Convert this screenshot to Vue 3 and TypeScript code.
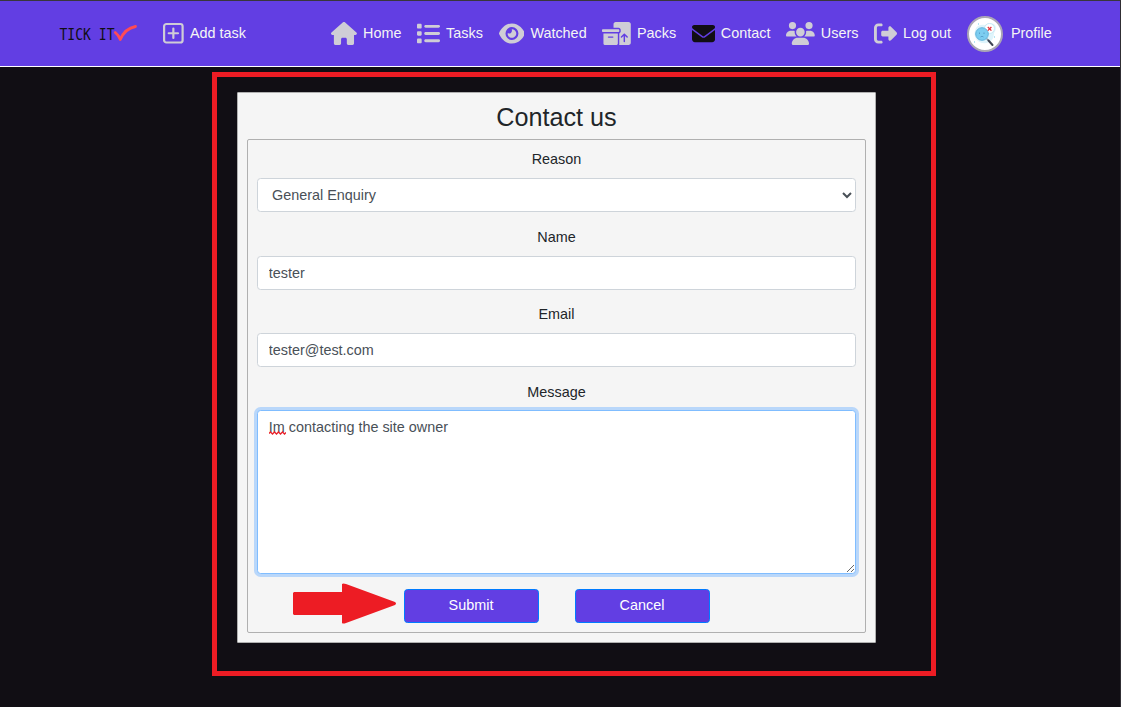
<script setup lang="ts">
import { ref } from 'vue'

interface NavLink {
  label: string
  width: number
  path: string
  dark?: boolean
}

const links: NavLink[] = [
  {
    label: 'Home',
    width: 576,
    path: 'M575.8 255.5c0 18-15 32.1-32 32.1h-32l.7 160.2c0 2.7-.2 5.4-.5 8.1V472c0 22.1-17.9 40-40 40H456c-1.1 0-2.2 0-3.3-.1c-1.4 .1-2.8 .1-4.2 .1H416 392c-22.1 0-40-17.9-40-40V448 384c0-17.7-14.3-32-32-32H256c-17.7 0-32 14.3-32 32v64 24c0 22.1-17.9 40-40 40H160 128.1c-1.5 0-3-.1-4.5-.2c-1.2 .1-2.4 .2-3.6 .2H104c-22.1 0-40-17.9-40-40V360c0-.9 0-1.9 .1-2.8V287.6H32c-18 0-32-14-32-32.1c0-9 3-17 10-24L266.4 8c7-7 15-8 22-8s15 2 21 7L564.8 231.5c8 7 12 15 11 24z',
  },
  {
    label: 'Tasks',
    width: 512,
    path: 'M24 40C10.7 40 0 50.7 0 64v56c0 13.3 10.7 24 24 24H80c13.3 0 24-10.7 24-24V64c0-13.3-10.7-24-24-24H24zM192 64c-17.7 0-32 14.3-32 32s14.3 32 32 32H480c17.7 0 32-14.3 32-32s-14.3-32-32-32H192zm0 160c-17.7 0-32 14.3-32 32s14.3 32 32 32H480c17.7 0 32-14.3 32-32s-14.3-32-32-32H192zm0 160c-17.7 0-32 14.3-32 32s14.3 32 32 32H480c17.7 0 32-14.3 32-32s-14.3-32-32-32H192zM0 232v48c0 13.3 10.7 24 24 24H80c13.3 0 24-10.7 24-24V232c0-13.3-10.7-24-24-24H24c-13.3 0-24 10.7-24 24zM24 368c-13.3 0-24 10.7-24 24v56c0 13.3 10.7 24 24 24H80c13.3 0 24-10.7 24-24V392c0-13.3-10.7-24-24-24H24z',
  },
  {
    label: 'Watched',
    width: 576,
    path: 'M288 32c-80.8 0-145.5 36.8-192.6 80.6C48.6 156 17.3 208 2.5 243.7c-3.3 7.9-3.3 16.7 0 24.6C17.3 304 48.6 356 95.4 399.4C142.5 443.2 207.2 480 288 480s145.5-36.8 192.6-80.6c46.8-43.5 78.1-95.4 93-131.1c3.3-7.9 3.3-16.7 0-24.6c-14.9-35.7-46.2-87.7-93-131.1C433.5 68.8 368.8 32 288 32zM144 256a144 144 0 1 1 288 0 144 144 0 1 1 -288 0zm144-64c0 35.3-28.7 64-64 64c-7.1 0-13.9-1.2-20.3-3.3c-5.5-1.8-11.9 1.6-11.7 7.4c.3 6.9 1.3 13.8 3.2 20.7c13.7 51.2 66.4 81.6 117.6 67.9s81.6-66.4 67.9-117.6c-11.1-41.5-47.8-69.4-88.6-71.1c-5.8-.2-9.2 6.1-7.4 11.7c2.1 6.4 3.3 13.2 3.3 20.3z',
  },
  {
    label: 'Packs',
    width: 640,
    path: 'M256 48c0-26.5 21.5-48 48-48H592c26.5 0 48 21.5 48 48V464c0 26.5-21.5 48-48 48H381.3c1.8-5 2.7-10.4 2.7-16V253.3c18.6-6.6 32-24.4 32-45.3V176c0-26.5-21.5-48-48-48H256V48zM571.3 347.3c6.2-6.2 6.2-16.4 0-22.6l-64-64c-6.2-6.2-16.4-6.2-22.6 0l-64 64c-6.2 6.2-6.2 16.4 0 22.6s16.4 6.2 22.6 0L480 310.6V432c0 8.8 7.2 16 16 16s16-7.2 16-16V310.6l36.7 36.7c6.2 6.2 16.4 6.2 22.6 0zM0 176c0-8.8 7.2-16 16-16H368c8.8 0 16 7.2 16 16v32c0 8.8-7.2 16-16 16H16c-8.8 0-16-7.2-16-16V176zm352 80V480c0 17.7-14.3 32-32 32H64c-17.7 0-32-14.3-32-32V256H352zM144 320c-8.8 0-16 7.2-16 16s7.2 16 16 16h96c8.8 0 16-7.2 16-16s-7.2-16-16-16H144z',
  },
  {
    label: 'Contact',
    width: 512,
    dark: true,
    path: 'M48 64C21.5 64 0 85.5 0 112c0 15.1 7.1 29.3 19.2 38.4L236.8 313.6c11.4 8.5 27 8.5 38.4 0L492.8 150.4c12.1-9.1 19.2-23.3 19.2-38.4c0-26.5-21.5-48-48-48H48zM0 176V384c0 35.3 28.7 64 64 64H448c35.3 0 64-28.7 64-64V176L294.4 339.2c-22.8 17.1-54 17.1-76.8 0L0 176z',
  },
  {
    label: 'Users',
    width: 640,
    path: 'M144 0a80 80 0 1 1 0 160A80 80 0 1 1 144 0zM512 0a80 80 0 1 1 0 160A80 80 0 1 1 512 0zM0 298.7C0 239.8 47.8 192 106.7 192h42.7c15.9 0 31 3.5 44.6 9.7c-1.3 7.2-1.9 14.7-1.9 22.3c0 38.2 16.8 72.5 43.3 96c-.2 0-.4 0-.7 0H21.3C9.6 320 0 310.4 0 298.7zM405.3 320c-.2 0-.4 0-.7 0c26.6-23.5 43.3-57.8 43.3-96c0-7.6-.7-15-1.9-22.3c13.6-6.3 28.7-9.7 44.6-9.7h42.7C592.2 192 640 239.8 640 298.7c0 11.8-9.6 21.3-21.3 21.3H405.3zM224 224a96 96 0 1 1 192 0 96 96 0 1 1 -192 0zM128 485.3C128 411.7 187.7 352 261.3 352H378.7C452.3 352 512 411.7 512 485.3c0 14.7-11.9 26.7-26.7 26.7H154.7c-14.7 0-26.7-11.9-26.7-26.7z',
  },
  {
    label: 'Log out',
    width: 512,
    path: 'M377.9 105.9L500.7 228.7c7.2 7.2 11.3 17.1 11.3 27.3s-4.1 20.1-11.3 27.3L377.9 406.1c-6.4 6.4-15 9.9-24 9.9c-18.7 0-33.9-15.2-33.9-33.9l0-62.1-128 0c-17.7 0-32-14.3-32-32l0-64c0-17.7 14.3-32 32-32l128 0 0-62.1c0-18.7 15.2-33.9 33.9-33.9c9 0 17.6 3.6 24 9.9zM160 96L96 96c-17.7 0-32 14.3-32 32l0 256c0 17.7 14.3 32 32 32l64 0c17.7 0 32 14.3 32 32s-14.3 32-32 32l-64 0c-53 0-96-43-96-96L0 128C0 75 43 32 96 32l64 0c17.7 0 32 14.3 32 32s-14.3 32-32 32z',
  },
]

const reason = ref('General Enquiry')
const name = ref('tester')
const email = ref('tester@test.com')
const message = ref('Im contacting the site owner')
</script>

<template>
  <div class="page">
    <header class="navbar">
      <svg class="logo" width="80" height="24" viewBox="0 0 80 24">
        <text x="0.5" y="17.7" textLength="55" lengthAdjust="spacingAndGlyphs">TICK IT</text>
        <path class="tick" d="M56.300 10.500Q59.500 13 61.300 17.500Q66 6.500 76.500 4.500" />
      </svg>
      <a class="link add">
        <svg width="21" height="23" viewBox="0 0 21 23">
          <rect x="1.100" y="2" width="18.500" height="18.500" rx="2.300" />
          <path d="M10.350 6.600v9.300M5.700 11.250h9.300" />
        </svg>
        <span>Add task</span>
      </a>
      <nav class="links">
        <a v-for="link in links" :key="link.label" class="link" :class="{ current: link.dark }">
          <svg :width="(link.width * 23.04) / 512" height="23.04" :viewBox="`0 0 ${link.width} 512`">
            <path :d="link.path" />
          </svg>
          <span>{{ link.label }}</span>
        </a>
        <a class="link profile">
          <svg width="36" height="36" viewBox="0 0 36 36">
            <circle cx="18" cy="18" r="17" fill="#fff" stroke="#aaa6b5" stroke-width="2" />
            <path d="M9 12Q12 8 18 9Q24 5 28 9Q30 13 27 17Q27 25 20 27Q12 28 9 23Q6 18 9 12Z" fill="#dff4fb" />
            <circle cx="22.500" cy="12.500" r="5" fill="#fff" stroke="#c9ebf5" />
            <path d="M19.500 22.500l2 2" stroke="#8296a5" stroke-width="1.500" />
            <path d="M21.500 24.500l4 4.500" stroke="#3f4452" stroke-width="2" stroke-linecap="round" />
            <circle cx="15" cy="18" r="6.300" fill="#7ccdf0" stroke="#62b4dd" />
            <path d="M12.500 16.500v1.500M17 16.500v1.500M13.500 21q1.500-1.500 3 0" fill="none" stroke="#4f96c2" stroke-width="0.800" />
            <path d="M20.800 11l3.600 3.600m0-3.600l-3.600 3.600" stroke="#e3343e" stroke-width="1.300" />
            <path d="M11 8h1M7 26h1M27 21h1" stroke="#6ccbe8" />
          </svg>
          <span>Profile</span>
        </a>
      </nav>
    </header>

    <main>
      <form class="card" @submit.prevent>
        <h1>Contact us</h1>
        <div class="panel">
          <label for="reason">Reason</label>
          <select id="reason" v-model="reason" class="control select">
            <option>General Enquiry</option>
          </select>
          <label for="name">Name</label>
          <input id="name" v-model="name" class="control" type="text" />
          <label for="email">Email</label>
          <input id="email" v-model="email" class="control" type="email" />
          <label for="message" class="message-label">Message</label>
          <div class="message">
            <textarea id="message" v-model="message" class="control area" spellcheck="false"></textarea>
            <svg class="squiggle" width="17" height="4" viewBox="0 0 17 4">
              <path d="M0 2.500l1.500-1.500 2 2 2-2 2 2 2-2 2 2 2-2 2 2 1.500-1.500" />
            </svg>
          </div>
          <div class="actions">
            <button type="submit">Submit</button>
            <button type="button">Cancel</button>
          </div>
        </div>
      </form>
    </main>

    <div class="frame"></div>
    <svg class="arrow" width="104" height="41" viewBox="0 0 104 41">
      <path d="M1 9H49V1Q50 0 53 1L102 19Q104 20.500 102 22L53 40Q50 41 49 40V32H1L0 31V10Z" />
    </svg>
  </div>
</template>

<style>
body {
  margin: 0;
  background: #110e14;
}
</style>

<style scoped>
* {
  box-sizing: border-box;
}
.page {
  position: relative;
  height: 707px;
  overflow: hidden;
  background: #110e14;
  border-top: 1px solid #38363c;
  border-right: 1px solid #302e34;
  color: #212529;
  font: 14.4px/21.6px "Liberation Sans", Arial, sans-serif;
}
.navbar {
  display: flex;
  align-items: center;
  height: 66px;
  padding: 0 68.3px 0 59px;
  border-bottom: 1px solid #fff;
  background: #623ee3;
}
.logo text {
  fill: #110e14;
  font: 16px "DejaVu Sans Mono", monospace;
}
.tick {
  fill: none;
  stroke: #ff4b55;
  stroke-width: 2.8;
  stroke-linecap: round;
  stroke-linejoin: round;
}
.link {
  display: flex;
  align-items: center;
  gap: 5.9px;
  color: #f5f5f5;
  white-space: nowrap;
}
.link svg {
  flex: none;
  fill: #cfcdd6;
}
.add {
  margin-left: 24px;
}
.add svg {
  fill: none;
  stroke: #cfcdd6;
  stroke-width: 2.2;
  stroke-linecap: round;
}
.current svg {
  fill: #110e14;
}
.links {
  display: flex;
  align-items: center;
  gap: 15.7px;
  margin-left: auto;
}
.profile {
  gap: 8.2px;
}
main {
  padding: 25px 0 0 237px;
}
.card {
  width: 639px;
  height: 551px;
  padding: 9px;
  background: #f5f5f5;
  border: 1px solid #b0b0b0;
  border-radius: 1px;
}
h1 {
  margin: 0;
  height: 37px;
  font-size: 25.2px;
  font-weight: 400;
  line-height: 31px;
  text-align: center;
}
.panel {
  height: 494px;
  padding: 9.4px 9px 0;
  border: 1px solid #b0b0b0;
  border-radius: 2px;
}
label {
  display: block;
  height: 21.6px;
  margin-bottom: 7.2px;
  text-align: center;
}
.message-label {
  padding-top: 0.6px;
}
.control {
  display: block;
  width: 100%;
  height: 34.2px;
  margin: 0 0 14.4px;
  padding: 5.4px 10.8px;
  border: 1px solid #ced4da;
  border-radius: 3.6px;
  background-color: #fff;
  color: #495057;
  font: inherit;
  outline: 0;
}
.select {
  padding-left: 10px;
  padding-right: 10px;
}
.area {
  height: 164px;
  border-color: #80bdff;
  box-shadow: 0 0 0 3px #b9d7fa;
}
.message {
  position: relative;
}
.squiggle {
  position: absolute;
  top: 21px;
  left: 12px;
  fill: none;
  stroke: #e8202a;
  stroke-width: 1.3;
}
.actions {
  display: flex;
  justify-content: center;
  gap: 36px;
}
button {
  width: 135px;
  height: 34px;
  padding: 0;
  border: 1px solid #007bff;
  border-radius: 3.6px;
  background: #623ee3;
  color: #fff;
  font: inherit;
}
.frame {
  position: absolute;
  top: 71px;
  left: 212px;
  width: 724px;
  height: 604px;
  border: 5px solid #ed1c24;
}
.arrow {
  position: absolute;
  top: 582px;
  left: 293px;
  fill: #ed1c24;
}
</style>
